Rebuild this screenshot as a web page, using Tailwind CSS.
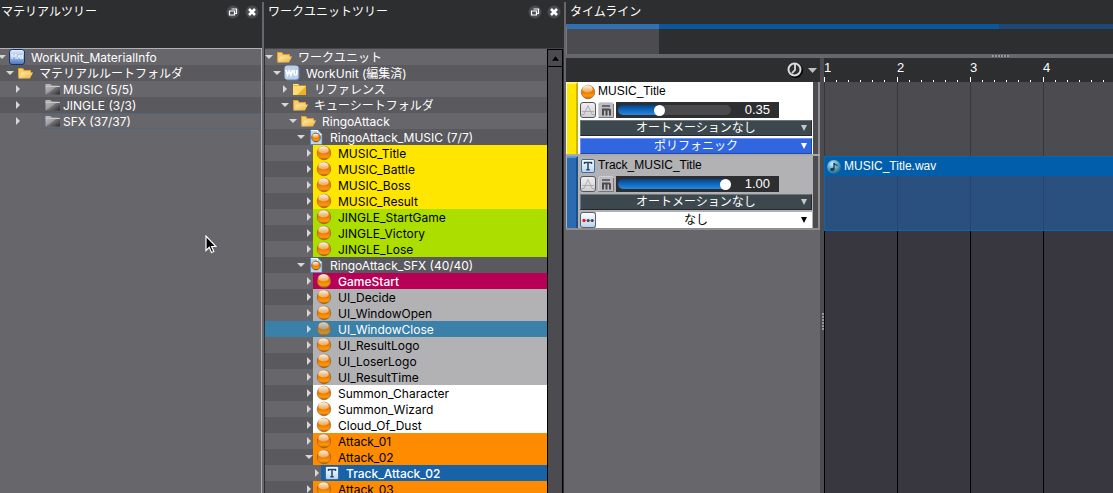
<!DOCTYPE html>
<html lang="ja">
<head>
<meta charset="utf-8">
<title>RingoAttack</title>
<script src="https://cdn.jsdelivr.net/npm/@tailwindcss/browser@4"></script>
</head>
<body class="flex h-screen overflow-hidden bg-[#2d2e30] font-[Inter,'Noto_Sans_CJK_JP',sans-serif] text-[12px] leading-4 text-white">

<svg class="absolute size-0" aria-hidden="true">
  <defs>
    <linearGradient id="gOrb" x1="0" y1="0" x2="0" y2="1"><stop offset="0" stop-color="#c98a4a"/><stop offset=".5" stop-color="#e87a00"/><stop offset=".8" stop-color="#ff9a10"/><stop offset="1" stop-color="#a85500"/></linearGradient>
    <linearGradient id="gShine" x1="0" y1="0" x2="0" y2="1"><stop offset="0" stop-color="#fff6e6"/><stop offset="1" stop-color="#f5b56c" stop-opacity=".7"/></linearGradient>
    <linearGradient id="gFold" x1="0" y1="0" x2="1" y2="1"><stop offset="0" stop-color="#fff0b8"/><stop offset="1" stop-color="#efac30"/></linearGradient>
    <linearGradient id="gGray" x1="0" y1="0" x2="1" y2="1"><stop offset="0" stop-color="#c0c0c2"/><stop offset=".5" stop-color="#9a9a9d"/><stop offset=".52" stop-color="#77777a"/><stop offset="1" stop-color="#2c2c2f"/></linearGradient>
    <linearGradient id="gMat" x1="0" y1="0" x2="0" y2="1"><stop offset="0" stop-color="#e6effc"/><stop offset=".5" stop-color="#9db9e6"/><stop offset="1" stop-color="#4a74bd"/></linearGradient>
    <linearGradient id="gBtn" x1="0" y1="0" x2="0" y2="1"><stop offset="0" stop-color="#f0f0f2"/><stop offset="1" stop-color="#cfcfd3"/></linearGradient>
    <linearGradient id="gT" x1="0" y1="0" x2="0" y2="1"><stop offset="0" stop-color="#ffffff"/><stop offset="1" stop-color="#b9d3ee"/></linearGradient>
    <radialGradient id="gWav" cx=".4" cy=".3" r=".75"><stop offset="0" stop-color="#d9f1f8"/><stop offset=".5" stop-color="#5fa9cb"/><stop offset="1" stop-color="#1f5874"/></radialGradient>
  </defs>
  <symbol id="orb" viewBox="0 0 16 16"><circle cx="8" cy="8" r="6.800" fill="url(#gOrb)" stroke="#8a5a2a" stroke-width=".6"/><ellipse cx="7.500" cy="4.900" rx="5.200" ry="3.700" fill="url(#gShine)"/></symbol>
  <symbol id="folderOpen" viewBox="0 0 16 16"><path d="M1 13V3h5l1.500 2H14v3H5z" fill="#e3a02c"/><path d="M2 4h3.500l1.500 2h6v2H5l-3 4z" fill="#f5cf6c"/><path d="M4.500 7.500H16L13 13.500H1.200z" fill="url(#gFold)"/></symbol>
  <symbol id="folder" viewBox="0 0 16 16"><path d="M1 3h5l1.500 1.500H14V14H1z" fill="#f0b21e"/><path d="M1 5h13L5 14H1z" fill="#ffdc70"/><path d="M1 3h5l1 1H1z" fill="#ffe9a8"/></symbol>
  <symbol id="folderGray" viewBox="0 0 16 16"><path d="M.5 3h5L7 4.500h8V13.500H.5z" fill="url(#gGray)"/><path d="M.5 5.500H15" stroke="#c8c8ca" fill="none"/></symbol>
  <symbol id="mat" viewBox="0 0 16 16"><rect x=".5" y=".5" width="15" height="15" rx="2.500" fill="url(#gMat)" stroke="#17326b"/><path d="M3 10V5l2 3 2-3v5M8.500 10l1.500-4 1.500 4M12 6v4M13.500 6v4" stroke="#f3f7ff" fill="none"/></symbol>
  <symbol id="wu" viewBox="0 0 16 16"><rect x="1" y="1" width="14.500" height="14.500" rx="3" fill="#5f7fae"/><rect x=".5" y=".5" width="14" height="14" rx="3" fill="#b9d0ee"/><path d="M2 5l1.500 5 1.700-4 1.700 4L8.500 5M10 5v3.500q0 1.500 1.400 1.500t1.400-1.500V5" stroke="#fff" stroke-width="1.700" fill="none"/></symbol>
  <symbol id="sheet" viewBox="0 0 16 16"><path d="M2.500 1H10l4 4v10.500H2.500z" fill="#b9d6f3" stroke="#4f7fb4" stroke-width=".7"/><path d="M3 1.500h6.500V5L13.500 5.500" fill="none" stroke="#fff"/><circle cx="8" cy="8.500" r="4.400" fill="url(#gOrb)" stroke="#5a3a1a" stroke-width=".6"/><ellipse cx="7.500" cy="6.800" rx="3" ry="2" fill="url(#gShine)"/></symbol>
  <symbol id="trk" viewBox="0 0 16 16"><rect x="1.500" y="1.500" width="13" height="13" rx="1.500" fill="url(#gT)" stroke="#3c6ea6"/><path d="M4.500 6V4.500h7V6M8 4.500v7M6.300 11.800h3.400" fill="none" stroke="#1c4676" stroke-width="1.500"/></symbol>
  <symbol id="down" viewBox="0 0 8 16"><path d="M0 6h8L4 10z" fill="#d6d6d8"/></symbol>
  <symbol id="right" viewBox="0 0 8 16"><path d="M2 4v8l4-4z" fill="#d6d6d8"/></symbol>
  <symbol id="float" viewBox="0 0 14 14"><circle cx="7" cy="7" r="6.500" fill="#4b4a4f"/><path d="M5.500 4h5v4.500H9M3.500 6h5v4h-5z" fill="none" stroke="#fff" stroke-width="1.200"/></symbol>
  <symbol id="close" viewBox="0 0 14 14"><circle cx="7" cy="7" r="6.500" fill="#4b4a4f"/><path d="M4 4l6 6M10 4l-6 6" stroke="#fff" stroke-width="2.600"/></symbol>
  <symbol id="env" viewBox="0 0 16 16"><rect x=".5" y=".5" width="15" height="15" rx="2.500" fill="url(#gBtn)" stroke="#55555a"/><path d="M1.500 12.500H4L8 3.500l4 9h2.500M2 9.500h12" fill="none" stroke="#a2a2a6" stroke-width=".8"/></symbol>
  <symbol id="mute" viewBox="0 0 16 16"><rect x=".5" y=".5" width="15" height="15" rx="2" fill="#bdbdc1" stroke="#d2d2d5"/><path d="M.5 15.500h15V2" fill="none" stroke="#77777b"/><path d="M4 4h8" fill="none" stroke="#4c4c50" stroke-width="1.500"/><path d="M5 13.500V8M8.500 13.500V8M12 13.500V8.500Q12 7.500 11 7.500H4" fill="none" stroke="#4c4c50" stroke-width="2"/></symbol>
  <symbol id="dots" viewBox="0 0 16 16"><rect x=".5" y=".5" width="15" height="15" rx="2.500" fill="url(#gT)" stroke="#55606c"/><circle cx="4" cy="8.500" r="1.700" fill="#e02020"/><circle cx="8.200" cy="8.500" r="1.600" fill="#444"/><circle cx="12.200" cy="8.500" r="1.600" fill="#444"/></symbol>
  <symbol id="wav" viewBox="0 0 16 16"><circle cx="8" cy="8" r="7" fill="url(#gWav)"/><path d="M8 10.500V4q1 2 3.500 2.500" fill="none" stroke="#123f63" stroke-width="1.400"/><ellipse cx="6.300" cy="10.500" rx="2.200" ry="1.700" fill="#123f63"/></symbol>
</svg>

<!-- Material tree -->
<section class="mt-[2px] flex w-[264px] shrink-0 flex-col border-r-2 border-[#67666b]">
  <header class="flex h-[46px] items-start justify-between pr-[3px] pl-px">
    <h2 class="pt-[2px]">マテリアルツリー</h2>
    <div class="flex gap-[5px] pt-[3px]">
      <button aria-label="フロート"><svg class="size-[14px]"><use href="#float"/></svg></button>
      <button aria-label="閉じる"><svg class="size-[14px]"><use href="#close"/></svg></button>
    </div>
  </header>
  <ul id="matTree" class="flex-1 overflow-hidden border-t border-r border-[#b4b0b8] bg-[#67666b]"></ul>
</section>

<!-- Work unit tree -->
<section class="mt-[2px] flex w-[302px] shrink-0 flex-col border-r-2 border-[#67666b] pl-px">
  <header class="flex h-[46px] items-start justify-between pr-[3px] pl-[3px]">
    <h2 class="pt-[2px]">ワークユニットツリー</h2>
    <div class="flex gap-[5px] pt-[3px]">
      <button aria-label="フロート"><svg class="size-[14px]"><use href="#float"/></svg></button>
      <button aria-label="閉じる"><svg class="size-[14px]"><use href="#close"/></svg></button>
    </div>
  </header>
  <div class="flex min-h-0 flex-1 border-t border-[#47464b]">
    <ul id="unitTree" class="flex-1 overflow-hidden"></ul>
    <div class="mr-px w-4 border-x border-black bg-[#4c4b50]">
      <button aria-label="上へ" class="flex h-[18px] w-full items-center justify-center border-y border-black"><svg class="h-[5px] w-[7px]" viewBox="0 0 8 5"><path d="M0 5h8L4 0z" fill="#000"/></svg></button>
    </div>
  </div>
</section>

<!-- Timeline -->
<main class="flex min-w-0 flex-1 flex-col">
  <h2 class="h-6 pt-1 pl-1">タイムライン</h2>
  <div class="flex h-[30px]">
    <div class="w-[93px] border-t-[5px] border-l border-t-[#2f71b3] border-l-[#77767b] bg-[#4c4b50]"></div>
    <div class="w-[340px] border-t-[5px] border-[#0a5799]"></div>
    <div class="flex-1 border-t-[5px] border-[#1c4878]"></div>
  </div>
  <div class="flex h-1 items-center bg-[#67666b] pl-[426px]"><div class="h-[2px] w-[17px] bg-[repeating-linear-gradient(90deg,#97969b_0_2px,#4c4b50_2px_3px)]"></div></div>

  <div class="flex min-h-0 flex-1 font-['Liberation_Sans','Noto_Sans_CJK_JP',sans-serif]">
    <div class="flex w-[254px] shrink-0 flex-col bg-[#67666b]">
      <div class="flex h-6 shrink-0 items-center justify-end bg-[#2d2e30] pr-[3px]">
        <button aria-label="時間表示" class="flex items-center gap-[5px]">
          <svg class="size-4" viewBox="0 0 16 16"><circle cx="8.500" cy="8.500" r="6.500" fill="none" stroke="#000" stroke-width="2"/><circle cx="7.500" cy="7.500" r="6" fill="#2d2e30" stroke="#dcdcde" stroke-width="2"/><path d="M8 2v6l-3 3.200" fill="none" stroke="#dcdcde" stroke-width="1.800"/></svg>
          <svg class="h-[5px] w-[9px]" viewBox="0 0 9 5"><path d="M0 0h9L4.500 5z" fill="#c0c0c2"/></svg>
        </button>
      </div>

      <div class="flex h-[74px] border-b-2 border-[#aaa9ac] bg-white pl-px text-black">
        <div class="w-[11px] border-t-2 border-r-2 border-t-[#fff27a] border-r-[#c9b400] bg-[#ffe600]"></div>
        <div class="flex min-w-0 flex-1 flex-col pr-px pl-[2px]">
          <div class="flex h-5 items-center gap-[2px]"><svg class="size-4"><use href="#orb"/></svg><span class="pb-[2px]">MUSIC_Title</span></div>
          <div class="flex h-4 gap-[2px]">
            <button aria-label="オートメーション"><svg class="size-4"><use href="#env"/></svg></button>
            <button aria-label="ミュート"><svg class="size-4"><use href="#mute"/></svg></button>
            <label class="flex w-[163px] items-center bg-[#2d2e30] pl-[2px] text-[13px] text-white">
              <input type="range" aria-label="ボリューム" min="0" max="100" value="35" class="h-[10px] w-[113px] appearance-none rounded-full bg-[linear-gradient(90deg,transparent_41px,#4a494e_41px),linear-gradient(#0a3f86,#0b62b5_40%,#2a86dd)] [&::-webkit-slider-thumb]:size-[11px] [&::-webkit-slider-thumb]:appearance-none [&::-webkit-slider-thumb]:rounded-full [&::-webkit-slider-thumb]:bg-white">
              <output class="flex-1 pr-[9px] text-right">0.35</output>
            </label>
          </div>
          <div class="relative mt-[2px] h-4">
            <select aria-label="オートメーション" class="block h-4 w-full appearance-none border border-t-[#6c767c] border-r-[#23292d] border-b-[#23292d] border-l-[#6c767c] bg-[#3c474e] leading-[14px] text-white [text-align-last:center]"><option>オートメーションなし</option></select>
            <svg class="pointer-events-none absolute top-[5px] right-[5px] h-[6px] w-[6px]" viewBox="0 0 6 6"><path d="M0 0h6L3 6z" fill="#c8c8ca"/></svg>
          </div>
          <div class="relative mt-[2px] h-4">
            <select aria-label="再生タイプ" class="block h-4 w-full appearance-none border border-t-[#6d94f0] border-r-[#1f48ab] border-b-[#1f48ab] border-l-[#6d94f0] bg-[#3066e0] leading-[14px] text-white [text-align-last:center]"><option>ポリフォニック</option></select>
            <svg class="pointer-events-none absolute top-[5px] right-[5px] h-[6px] w-[6px]" viewBox="0 0 6 6"><path d="M0 0h6L3 6z" fill="#fff"/></svg>
          </div>
        </div>
        <div class="w-[7px] border-r-2 border-r-[#8f8e93] bg-[#4c4b50]"></div>
      </div>

      <div class="flex h-[74px] border-b-2 border-[#8f8e93] bg-[#b2b1b4] pl-px text-black">
        <div class="w-[11px] border-t-2 border-r-2 border-t-[#5f9ad6] border-r-[#1c4f84] bg-[#2a6cb0]"></div>
        <div class="flex min-w-0 flex-1 flex-col pr-px pl-[2px]">
          <div class="flex h-5 items-center gap-[2px]"><svg class="size-4"><use href="#trk"/></svg><span class="pb-[2px]">Track_MUSIC_Title</span></div>
          <div class="flex h-4 gap-[2px]">
            <button aria-label="オートメーション"><svg class="size-4"><use href="#env"/></svg></button>
            <button aria-label="ミュート"><svg class="size-4"><use href="#mute"/></svg></button>
            <label class="flex w-[163px] items-center bg-[#2d2e30] pl-[2px] text-[13px] text-white">
              <input type="range" aria-label="ボリューム" min="0" max="100" value="100" class="h-[10px] w-[113px] appearance-none rounded-full bg-[linear-gradient(90deg,transparent_108px,#4a494e_108px),linear-gradient(#0a3f86,#0b62b5_40%,#2a86dd)] [&::-webkit-slider-thumb]:size-[11px] [&::-webkit-slider-thumb]:appearance-none [&::-webkit-slider-thumb]:rounded-full [&::-webkit-slider-thumb]:bg-white">
              <output class="flex-1 pr-[9px] text-right">1.00</output>
            </label>
          </div>
          <div class="relative mt-[2px] h-4">
            <select aria-label="オートメーション" class="block h-4 w-full appearance-none border border-t-[#6c767c] border-r-[#23292d] border-b-[#23292d] border-l-[#6c767c] bg-[#3c474e] leading-[14px] text-white [text-align-last:center]"><option>オートメーションなし</option></select>
            <svg class="pointer-events-none absolute top-[5px] right-[5px] h-[6px] w-[6px]" viewBox="0 0 6 6"><path d="M0 0h6L3 6z" fill="#c8c8ca"/></svg>
          </div>
          <div class="relative mt-[2px] flex h-4">
            <button aria-label="設定"><svg class="size-4"><use href="#dots"/></svg></button>
            <select aria-label="バス" class="block h-4 min-w-0 flex-1 appearance-none bg-white pr-4 leading-4 text-black [text-align-last:center]"><option>なし</option></select>
            <svg class="pointer-events-none absolute top-[5px] right-[5px] h-[6px] w-[6px]" viewBox="0 0 6 6"><path d="M0 0h6L3 6z" fill="#000"/></svg>
          </div>
        </div>
        <div class="w-[7px] border-r-2 border-r-[#8f8e93] bg-[#4c4b50]"></div>
      </div>
    </div>

    <div class="flex w-1 shrink-0 items-center justify-end bg-[#4c4b50] pb-[153px]"><div class="mt-[246px] h-[18px] w-[2px] shrink-0 bg-[repeating-linear-gradient(180deg,#97969b_0_2px,#4c4b50_2px_3px)]"></div></div>

    <div class="flex min-w-0 flex-1 flex-col">
      <div id="ruler" class="flex h-6 shrink-0 overflow-hidden text-[13px]"></div>
      <div class="h-[74px] shrink-0 bg-[#4c4b50] bg-[repeating-linear-gradient(90deg,#38373c_0_1px,transparent_1px_73px)]"></div>
      <div class="h-[75px] shrink-0 border-y border-l border-[#0a64ae] bg-[#29507f] bg-[repeating-linear-gradient(90deg,transparent_0_72px,#27466f_72px_73px)]">
        <div class="flex h-[19px] items-center gap-[2px] bg-[#005eaa] pl-px"><svg class="size-4"><use href="#wav"/></svg><span class="pb-[2px]">MUSIC_Title.wav</span></div>
      </div>
      <div class="flex-1 bg-[#383740] bg-[repeating-linear-gradient(90deg,#000_0_1px,transparent_1px_73px)]"></div>
    </div>
  </div>
</main>

<svg class="pointer-events-none absolute top-[235px] left-[205px] h-[19px] w-[12px]" viewBox="0 0 12 19" aria-hidden="true"><path d="M1 1v14.500l3.300-3.200 2.200 5.200 2.300-1-2.200-5H11z" fill="#000" stroke="#fff" stroke-width="1.200"/></svg>

<script>
  const row = (base, icon, open, text, indent, fill) =>
    `<li class="flex h-4 ${base}"><span class="shrink-0" style="width:${indent}px"></span>` +
    `<svg class="h-4 w-2 shrink-0"><use href="#${open ? 'down' : 'right'}"/></svg>` +
    `<div class="flex min-w-0 flex-1 items-center whitespace-nowrap pl-[3px] ${fill}">` +
    `<svg class="size-4 shrink-0"><use href="#${icon}"/></svg><span class="pt-px">${text}</span></div></li>`;
  const zebra = i => i % 2 ? 'bg-[#5a595e]' : 'bg-[#67666b]';

  const mat = [
    [0, 'mat', 1, 'WorkUnit_MaterialInfo', 'gap-[6px]'],
    [1, 'folderOpen', 1, 'マテリアルルートフォルダ', 'gap-[6px]'],
    [2, 'folderGray', 0, 'MUSIC (5/5)', 'ml-[20px] gap-[2px]'],
    [2, 'folderGray', 0, 'JINGLE (3/3)', 'ml-[20px] gap-[2px]'],
    [2, 'folderGray', 0, 'SFX (37/37)', 'ml-[20px] gap-[2px] outline -outline-offset-1 outline-[#51667a]'],
  ];
  document.getElementById('matTree').innerHTML = mat.map(([d, icon, open, text, fill], i) =>
    row(zebra(i) + ' -ml-[2px]', icon, open, text, d * 8, fill)).join('');

  const Y = 'bg-[#ffe600] text-black', L = 'bg-[#acde00] text-black', G = 'bg-[#b2b1b4] text-black',
        W = 'bg-white text-black', O = 'bg-[#ff8c00] text-black';
  const unit = [
    [0, 'folderOpen', 1, 'ワークユニット', ''],
    [1, 'wu', 1, 'WorkUnit (編集済)', ''],
    [2, 'folder', 0, 'リファレンス', ''],
    [2, 'folderOpen', 1, 'キューシートフォルダ', ''],
    [3, 'folderOpen', 1, 'RingoAttack', ''],
    [4, 'sheet', 1, 'RingoAttack_MUSIC (7/7)', ''],
    [5, 'orb', 0, 'MUSIC_Title', Y], [5, 'orb', 0, 'MUSIC_Battle', Y],
    [5, 'orb', 0, 'MUSIC_Boss', Y], [5, 'orb', 0, 'MUSIC_Result', Y],
    [5, 'orb', 0, 'JINGLE_StartGame', L], [5, 'orb', 0, 'JINGLE_Victory', L], [5, 'orb', 0, 'JINGLE_Lose', L],
    [4, 'sheet', 1, 'RingoAttack_SFX (40/40)', ''],
    [5, 'orb', 0, 'GameStart', 'bg-[#b80058] font-medium'],
    [5, 'orb', 0, 'UI_Decide', G], [5, 'orb', 0, 'UI_WindowOpen', G],
    [5, 'orb', 0, 'UI_WindowClose', 'bg-[#3a80a8] [&>svg]:opacity-75'],
    [5, 'orb', 0, 'UI_ResultLogo', G], [5, 'orb', 0, 'UI_LoserLogo', G], [5, 'orb', 0, 'UI_ResultTime', G],
    [5, 'orb', 0, 'Summon_Character', W], [5, 'orb', 0, 'Summon_Wizard', W], [5, 'orb', 0, 'Cloud_Of_Dust', W],
    [5, 'orb', 0, 'Attack_01', O], [5, 'orb', 1, 'Attack_02', O],
    [6, 'trk', 0, 'Track_Attack_02', 'bg-[#1862a8] font-medium'],
    [5, 'orb', 0, 'Attack_03', O],
  ];
  document.getElementById('unitTree').innerHTML = unit.map(([d, icon, open, text, fill], i) =>
    row(i === 17 ? 'bg-[#3a80a8]' : zebra(i), icon, open, text, d * 8, 'gap-[6px] ' + fill)).join('');

  const minor = '<i class="h-[2px] w-px bg-white"></i>';
  document.getElementById('ruler').innerHTML = [1, 2, 3, 4].map(n =>
    `<div class="flex w-[73px] shrink-0 flex-col justify-between pt-[2px]"><span>${n}</span>` +
    `<div class="flex items-end gap-[11px]"><i class="h-[5px] w-px bg-white"></i>${minor.repeat(5)}</div></div>`).join('');
</script>
</body>
</html>
